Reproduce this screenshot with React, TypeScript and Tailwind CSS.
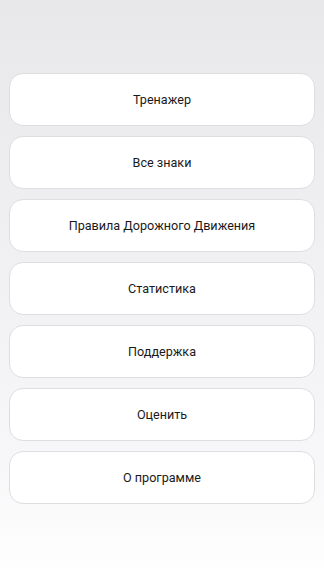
import React from "react";

const items = [
  "Тренажер",
  "Все знаки",
  "Правила Дорожного Движения",
  "Статистика",
  "Поддержка",
  "Оценить",
  "О программе",
];

export default function App() {
  return (
    <div
      className="w-[324px] h-[576px] bg-gradient-to-b from-[#e8e7e9] via-[#f7f6f8] via-80% to-[#ffffff] px-[9px] pt-[73px] flex flex-col gap-[10px]"
      style={{ fontFamily: "Roboto, 'Noto Sans', sans-serif" }}
    >
      {items.map((t) => (
        <div
          key={t}
          className="h-[53px] pt-[2px] rounded-[14px] bg-white border border-[#dedde0] flex items-center justify-center text-[12.6px] text-[#1a1a1a]"
        >
          {t}
        </div>
      ))}
    </div>
  );
}
